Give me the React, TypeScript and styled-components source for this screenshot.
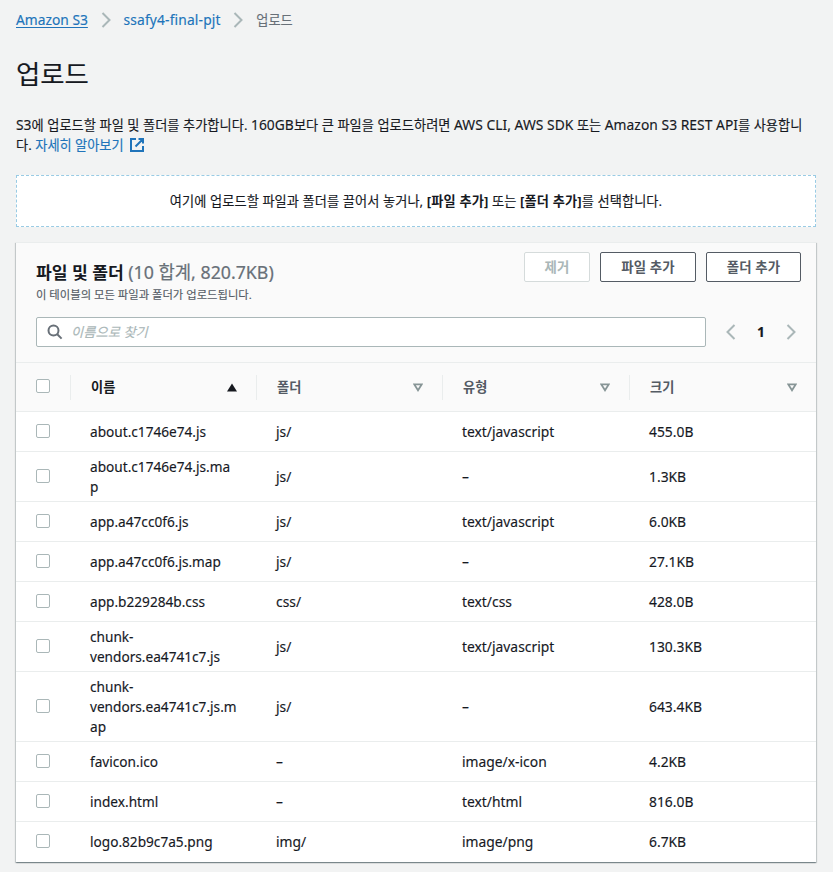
import React from 'react';
import styled, { createGlobalStyle } from 'styled-components';

const GlobalStyle = createGlobalStyle`
  * { box-sizing: border-box; }
  body {
    margin: 0;
    background: #f2f3f3;
    color: #16191f;
    font-family: 'Noto Sans', 'Noto Sans CJK KR', sans-serif;
    font-size: 13.2px;
    line-height: 20px;
    -webkit-text-stroke: 0.14px currentColor;
  }
`;

const Page = styled.main`
  height: 872px;
  padding: 10px 17px 0 16px;
  overflow: hidden;
`;

const Breadcrumbs = styled.nav`
  display: flex;
  align-items: center;
  height: 20px;
  color: #687078;
`;

const Crumb = styled.a<{ $underlined?: boolean }>`
  color: #2074ba;
  font-size: 13.8px;
  letter-spacing: ${p => (p.$underlined ? 0 : '0.15px')};
  text-decoration: ${p => (p.$underlined ? 'underline' : 'none')};
  text-underline-offset: 2px;
`;

const CrumbArrow = styled.svg`
  width: 10px;
  height: 16px;
  margin: 0 13px 0 12.7px;
`;

const PageTitle = styled.h1`
  margin: 26px 0 0;
  height: 36px;
  font-size: 26.4px;
  line-height: 36px;
  font-weight: 400;
`;

const Intro = styled.p`
  margin: 23px 0 0;
  white-space: nowrap;
  letter-spacing: 0.05px;
`;

const En = styled.span`
  font-size: 13.8px;
`;

const InfoLink = styled.a`
  color: #2074ba;
  letter-spacing: 0;
`;

const ExternalIcon = styled.svg`
  width: 16px;
  height: 16px;
  margin-left: 5px;
  vertical-align: -3px;
`;

const DropZone = styled.section`
  display: flex;
  align-items: center;
  justify-content: center;
  height: 52px;
  margin-top: 20px;
  background: #fff;
  border: 1px dashed #99cbe4;
  white-space: pre;
  letter-spacing: 0.09px;
`;

const Strong = styled.b`
  letter-spacing: 0.15px;
  -webkit-text-stroke: 0;
`;

const Card = styled.section`
  margin-top: 15px;
  background: #fff;
  box-shadow: 0 1px 1px 0 rgba(0, 28, 36, 0.3), 1px 1px 1px 0 rgba(0, 28, 36, 0.15),
    -1px 1px 1px 0 rgba(0, 28, 36, 0.15);
  border-top: 1px solid #eaeded;
`;

const CardHeader = styled.header`
  height: 120px;
  padding: 9px 15px 0 20px;
  background: #fafafa;
  border-bottom: 1px solid #eaeded;
`;

const HeaderTop = styled.div`
  display: flex;
  justify-content: space-between;
  height: 65px;
`;

const Titles = styled.div`
  padding-top: 8px;
`;

const CardTitle = styled.h2`
  margin: 0;
  height: 26px;
  font-size: 17.15px;
  line-height: 24px;
  font-weight: 700;
  -webkit-text-stroke: 0;
`;

const Count = styled.span`
  font-size: 17.75px;
  font-weight: 400;
  color: #687078;
  -webkit-text-stroke: 0.2px currentColor;
`;

const Description = styled.p`
  margin: 0;
  font-size: 11.33px;
  line-height: 18px;
  color: #545b64;
`;

const Actions = styled.div`
  display: flex;
  gap: 10px;
`;

const Button = styled.button<{ $width: number }>`
  width: ${p => p.$width}px;
  height: 30px;
  padding: 0;
  font: inherit;
  font-size: 13.4px;
  font-weight: 700;
  line-height: 28px;
  letter-spacing: 0.1px;
  color: #545b64;
  background: #fff;
  border: 1px solid #545b64;
  border-radius: 2px;
  -webkit-text-stroke: 0;
  &:disabled {
    color: #aab7b8;
    border-color: #d5dbdb;
  }
`;

const Tools = styled.div`
  display: flex;
  align-items: center;
`;

const SearchBox = styled.label`
  display: flex;
  align-items: center;
  width: 670px;
  height: 30px;
  padding-left: 9.5px;
  gap: 8.5px;
  background: #fff;
  border: 1px solid #aab7b8;
  border-radius: 2px;
`;

const SearchInput = styled.input`
  flex: 1;
  height: 26px;
  padding: 0;
  border: 0;
  outline: 0;
  background: transparent;
  font: inherit;
  font-size: 13.3px;
  &::placeholder {
    color: #aab7b8;
    opacity: 1;
    font-style: italic;
  }
`;

const SearchIcon = styled.svg`
  width: 16px;
  height: 16px;
`;

const Pager = styled.div`
  display: flex;
  align-items: center;
  justify-content: space-between;
  width: 70px;
  margin-left: 20px;
  font-size: 13.8px;
  font-weight: 700;
`;

const PagerArrow = styled.svg`
  width: 10px;
  height: 16px;
`;

const Row = styled.div`
  display: grid;
  grid-template-columns: 54px 186px 186px 187px 187px;
  align-items: center;
  min-height: 40px;
  padding: 4px 0;
  border-bottom: 1px solid #eaeded;
  font-size: 13.85px;
  &:last-child {
    border-bottom-color: transparent;
  }
`;

const HeadRow = styled(Row)`
  height: 49px;
  padding: 0;
  background: #fafafa;
  color: #545b64;
  font-size: 13.2px;
  font-weight: 700;
  -webkit-text-stroke: 0;
`;

const HeadCell = styled.div<{ $active?: boolean }>`
  display: flex;
  align-items: center;
  justify-content: space-between;
  height: 25px;
  padding: 0 19px 0 20px;
  border-left: 1px solid #eaeded;
  color: ${p => (p.$active ? '#16191f' : 'inherit')};
`;

const SortIcon = styled.svg`
  width: 10px;
  height: 9px;
`;

const Cell = styled.div`
  padding-left: 20px;
  padding-top: 1px;
  white-space: pre;
`;

const NameCell = styled(Cell)`
  font-size: 13.65px;
`;

const Check = styled.input`
  appearance: none;
  display: block;
  width: 14px;
  height: 14px;
  margin: 0 0 1px 20px;
  background: #fff;
  border: 1px solid #aab7b8;
  border-radius: 2px;
`;

const HeadCheck = styled(Check)`
  margin-bottom: 2px;
`;

const Chevron = ({ left = false }: { left?: boolean }) => (
  <path d={left ? 'M8.5 1 1.5 8l7 7' : 'm1.5 1 7 7-7 7'} fill="none" stroke="#aab7b8" strokeWidth="2" />
);

const columns = ['이름', '폴더', '유형', '크기'];

const files: [string, string, string, string][] = [
  ['about.c1746e74.js', 'js/', 'text/javascript', '455.0B'],
  ['about.c1746e74.js.ma\np', 'js/', '–', '1.3KB'],
  ['app.a47cc0f6.js', 'js/', 'text/javascript', '6.0KB'],
  ['app.a47cc0f6.js.map', 'js/', '–', '27.1KB'],
  ['app.b229284b.css', 'css/', 'text/css', '428.0B'],
  ['chunk-\nvendors.ea4741c7.js', 'js/', 'text/javascript', '130.3KB'],
  ['chunk-\nvendors.ea4741c7.js.m\nap', 'js/', '–', '643.4KB'],
  ['favicon.ico', '–', 'image/x-icon', '4.2KB'],
  ['index.html', '–', 'text/html', '816.0B'],
  ['logo.82b9c7a5.png', 'img/', 'image/png', '6.7KB'],
];

export default function App() {
  return (
    <Page>
      <GlobalStyle />
      <Breadcrumbs>
        <Crumb $underlined>Amazon S3</Crumb>
        <CrumbArrow viewBox="0 0 10 16"><Chevron /></CrumbArrow>
        <Crumb>ssafy4-final-pjt</Crumb>
        <CrumbArrow viewBox="0 0 10 16"><Chevron /></CrumbArrow>
        <span>업로드</span>
      </Breadcrumbs>
      <PageTitle>업로드</PageTitle>
      <Intro>
        <En>S3</En>에 업로드할 파일 및 폴더를 추가합니다. <En>160GB</En>보다 큰 파일을 업로드하려면{' '}
        <En>AWS CLI, AWS SDK</En> 또는 <En>Amazon S3 REST API</En>를 사용합니
        <br />
        다. <InfoLink>자세히 알아보기
          <ExternalIcon viewBox="0 0 16 16" fill="none" stroke="#2074ba" strokeWidth="2">
            <path d="M7 2H2v12h12V9M9.5 2H14v4.5M14 2 6.5 9.5" />
          </ExternalIcon>
        </InfoLink>
      </Intro>
      <DropZone>
        <span>
          여기에 업로드할 파일과 폴더를 끌어서 놓거나, <Strong>[파일 추가]</Strong> 또는 <Strong>[폴더 추가]</Strong>를 선택합니다.
        </span>
      </DropZone>
      <Card>
        <CardHeader>
          <HeaderTop>
            <Titles>
              <CardTitle>파일 및 폴더 <Count>(10 합계, 820.7KB)</Count></CardTitle>
              <Description>이 테이블의 모든 파일과 폴더가 업로드됩니다.</Description>
            </Titles>
            <Actions>
              <Button $width={66} disabled>제거</Button>
              <Button $width={96}>파일 추가</Button>
              <Button $width={95}>폴더 추가</Button>
            </Actions>
          </HeaderTop>
          <Tools>
            <SearchBox>
              <SearchIcon viewBox="0 0 16 16" fill="none" stroke="#687078" strokeWidth="2">
                <circle cx="6.5" cy="6.5" r="5" />
                <path d="m10 10 4.6 4.6" />
              </SearchIcon>
              <SearchInput placeholder="이름으로 찾기" />
            </SearchBox>
            <Pager>
              <PagerArrow viewBox="0 0 10 16"><Chevron left /></PagerArrow>
              1
              <PagerArrow viewBox="0 0 10 16"><Chevron /></PagerArrow>
            </Pager>
          </Tools>
        </CardHeader>
        <HeadRow>
          <HeadCheck type="checkbox" />
          {columns.map((name, i) => (
            <HeadCell key={name} $active={i === 0}>
              {name}
              <SortIcon viewBox="0 0 10 9">
                {i === 0 ? (
                  <path d="M5 0.5 10 8.5H0z" fill="#16191f" />
                ) : (
                  <path d="M1.3 1.4h7.4L5 7.3z" fill="none" stroke="#879596" strokeWidth="1.8" />
                )}
              </SortIcon>
            </HeadCell>
          ))}
        </HeadRow>
        <div>
          {files.map(([name, folder, type, size]) => (
            <Row key={name}>
              <Check type="checkbox" />
              <NameCell>{name}</NameCell>
              <Cell>{folder}</Cell>
              <Cell>{type}</Cell>
              <Cell>{size}</Cell>
            </Row>
          ))}
        </div>
      </Card>
    </Page>
  );
}
